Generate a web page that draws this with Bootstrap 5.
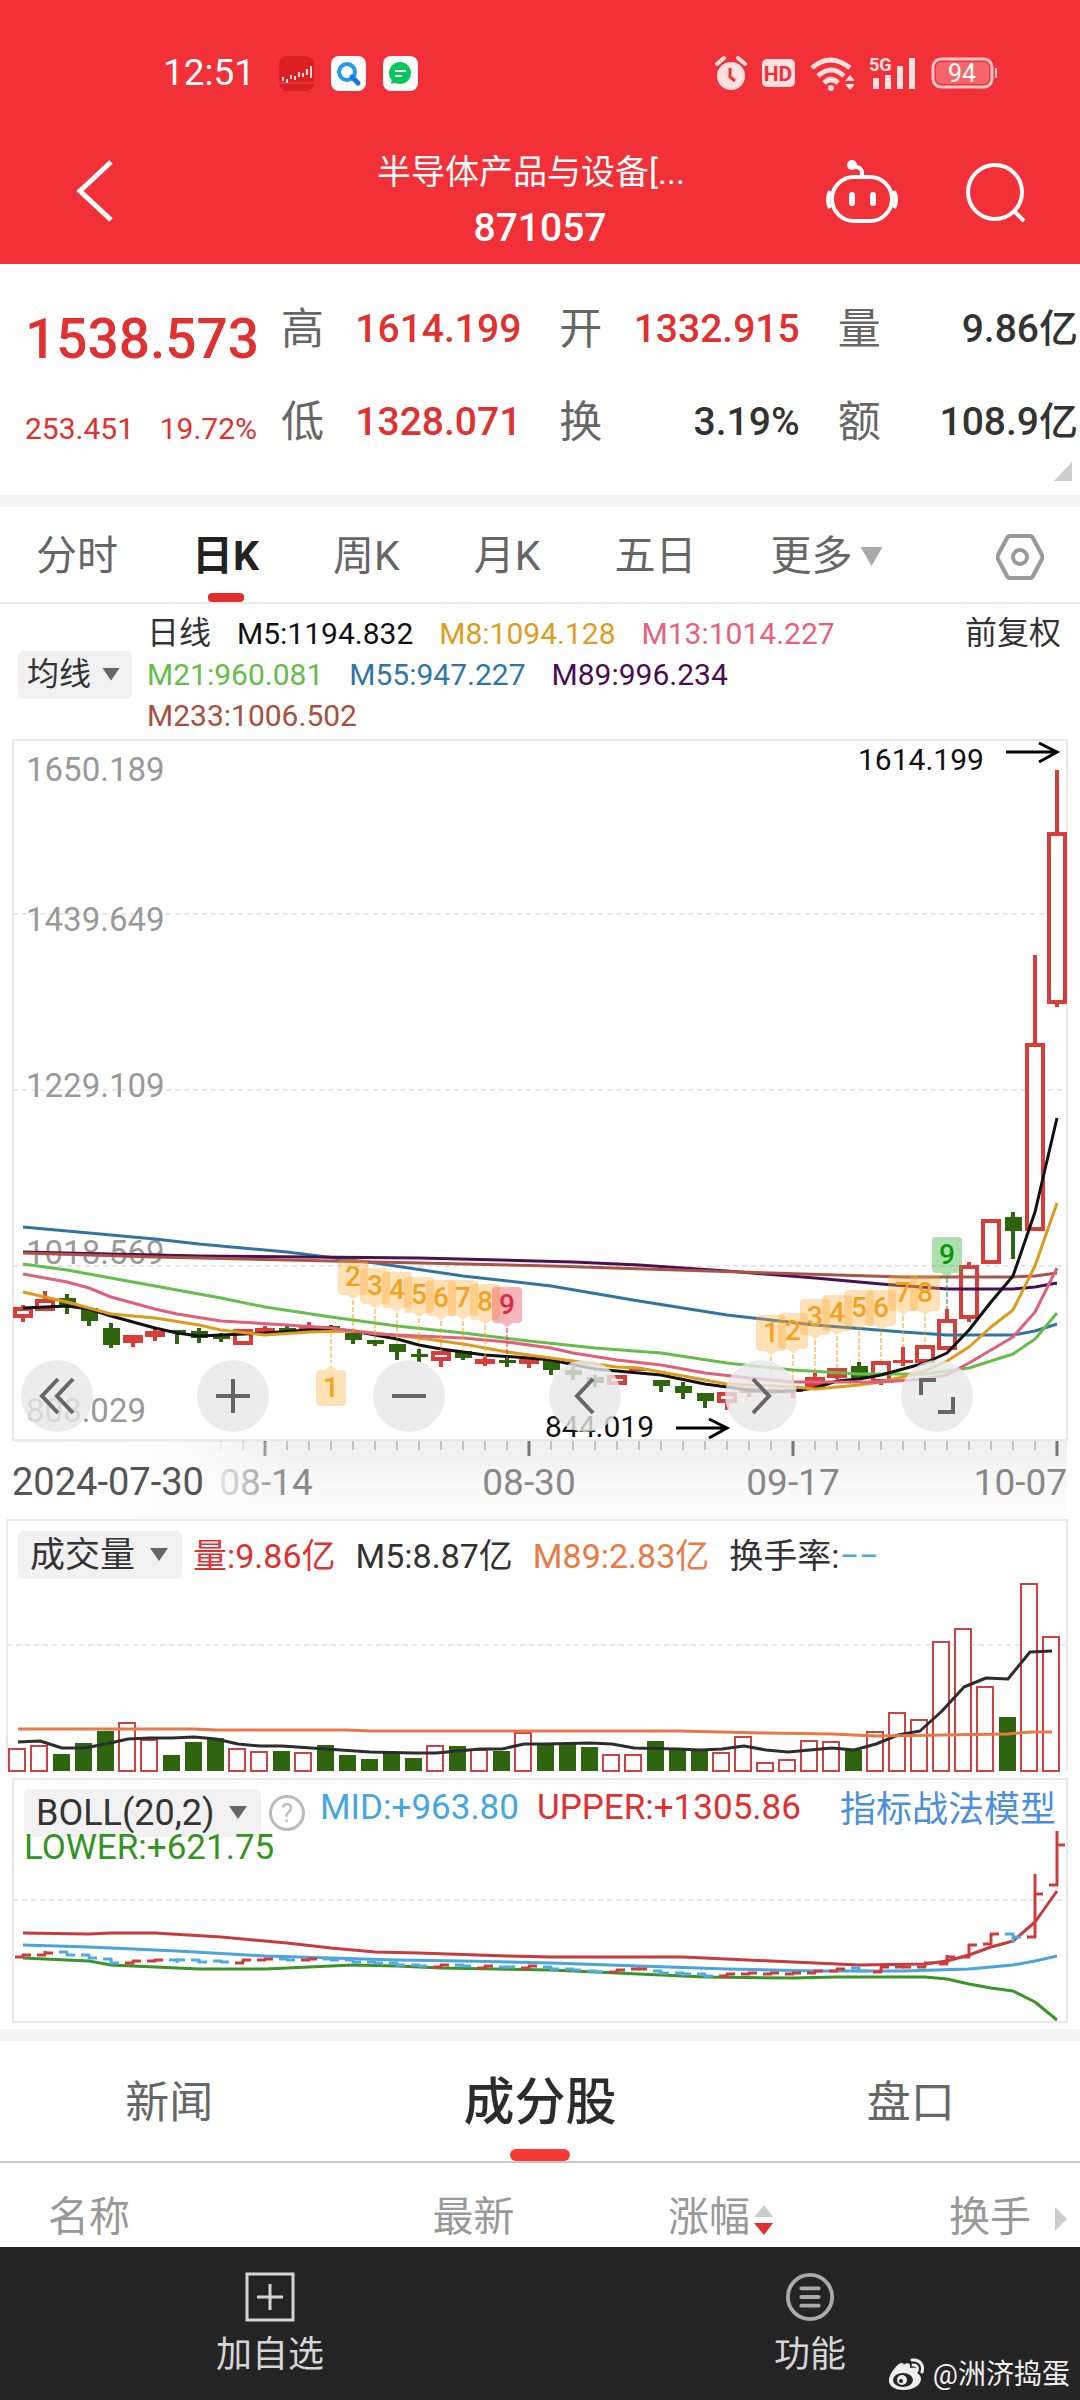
<!DOCTYPE html>
<html lang="zh-CN">
<head>
<meta charset="utf-8">
<meta name="viewport" content="width=device-width, initial-scale=1">
<title>半导体产品与设备 871057</title>
<link href="https://cdn.jsdelivr.net/npm/bootstrap@5.3.0/dist/css/bootstrap.min.css" rel="stylesheet">
<style>
:root{--up:#e0302f;--ink:#333;--mute:#666;--font:Roboto,"Noto Sans CJK SC",sans-serif}
body{font-family:var(--font);color:var(--ink);background:#fff}
button,select{font-family:inherit}
svg{display:block}
.bare{padding:0;border:0;border-radius:0;background:none;color:inherit;line-height:inherit}
.up{color:var(--up)}
.app-head{background:#f23038;color:#fff;height:264px}
.status{padding:50px 83px 0 163px;height:96px}
.clock{font-size:37px;line-height:44px}
.status-apps{gap:17px;margin-left:24px}
.status-sys{gap:15px}
.titlebar{height:168px;padding:0 54px}
.titlebar .side{flex:1 1 0}
.titlebar .back{margin-left:22px}
.titlebar .side-end{gap:68px}
.title-name{font-size:34px;line-height:56px;width:326px;white-space:nowrap}
.title-code{font-size:39px;line-height:56px;font-weight:500}
.quote{height:231px;padding-right:2px}
.quote-main{width:257px;padding:31px 0 0 25px;margin-right:24px;line-height:89px}
.quote-price{font-size:55px;font-weight:500;text-align:right}
.quote-chg{font-size:30px}
.quote-pairs{gap:0 38px;padding-top:19px;display:grid;grid-template-columns:repeat(3,1fr);align-content:start;margin:0;line-height:93px}
.quote-pairs dt{font-size:43px;font-weight:400;color:var(--mute)}
.quote-pairs dd{font-size:39px;font-weight:500;margin:0;white-space:nowrap}
.corner{right:8px;bottom:14px;width:18px;height:19px;background:#ccc;clip-path:polygon(100% 0,100% 100%,0 100%)}
.band{height:12px;background:#f4f4f4}
.period{height:97px;gap:74px;padding:0 36px;font-size:41px;border-bottom:2px solid #e9e9e9;color:var(--mute)}
.period .bare{line-height:91px;padding-top:4px;position:relative}
.period .active{color:#222;font-weight:700}
.period .active::after{content:"";position:absolute;left:50%;bottom:0;width:36px;height:9px;margin-left:-18px;border-radius:4px;background:var(--up)}
.tri{display:inline-block;width:22px;height:19px;background:#aaa;clip-path:polygon(0 0,100% 0,50% 100%)}
.pick{position:relative;display:inline-block;background:#f1f1f1;border-radius:6px}
.pick select{appearance:none;border:0;background:none;color:var(--ink);height:48px;padding:0 46px 0 12px;display:block}
.pick::after{content:"";position:absolute;right:14px;top:50%;width:18px;height:13px;margin-top:-7px;background:#666;clip-path:polygon(0 0,100% 0,50% 100%);pointer-events:none}
.pick-sm select{font-size:32px;padding:0 40px 0 9px}
.pick-sm::after{right:12px}
.ma-head{padding:9px 19px 2px 18px;font-size:30px;line-height:41px}
.ma-list{gap:0 26px;margin:0 20px 0 15px}
.ma-cjk{font-size:32px}
.tool-row{left:1.94%;right:9.9%;top:79.7%}
.tool{width:72px;height:72px;border-radius:50%;border:0;padding:0;background:rgba(231,231,231,.8);display:flex;align-items:center;justify-content:center}
.ind-row{font-size:34px;line-height:50px;left:18px;right:12px;top:13px;gap:20px;white-space:nowrap}
.ind-row select,.boll-row select{font-size:35px}
.ind-row .pick{margin-right:-9px;align-self:flex-start}
.boll-row{font-size:35px;line-height:40px;left:24px;right:24px;top:10px;white-space:nowrap}
.boll-row select{font-size:36px;padding-left:12px}
.boll-row .pick{margin-top:1px}
.help{width:36px;height:36px;border:3px solid #bbb;border-radius:50%;color:#bbb;font-size:26px;line-height:30px;padding:0;background:none;margin:7px 15px 0 8px}
.boll-upper{margin-left:18px}
.boll-low{left:24px;top:50px;font-size:35px;line-height:40px;color:#339423}
.model-link{font-size:36px;color:#4a8fe0;text-decoration:none;padding-top:2px}
.sub-tabs{height:122px;font-size:44px;color:var(--mute);border-bottom:2px solid #c8c8c8}
.sub-tabs .bare{line-height:116px;padding-top:4px;position:relative}
.sub-tabs .active{font-size:51px;font-weight:500;color:#2c2c2c}
.sub-tabs .active::after{content:"";position:absolute;left:50%;bottom:0;width:60px;height:12px;margin-left:-30px;border-radius:6px;background:#f93a33}
.stock-head{margin:0;font-size:41px;table-layout:fixed}
.stock-head th{font-weight:400;color:#999;height:84px;padding:24px 48px 0;border:0;white-space:nowrap;line-height:60px;vertical-align:top;background:none}
.stock-head th:nth-child(2){padding:24px 0 0 22px}
.stock-head th:nth-child(3){padding:24px 37px 0 0}
.stock-head th:nth-child(4){padding:24px 13px 0 0}
.sorter{display:inline-block;vertical-align:middle;margin-left:4px}
.more-cols{display:inline-block;margin-left:24px;width:12px;height:24px;background:#ccc;clip-path:polygon(0 0,100% 50%,0 100%)}
.dock{background:#242424;color:#d5d5d5;height:153px}
.dock .bare{font-size:36px;line-height:54px;padding-top:25px;align-self:flex-start}
.dock svg{margin:0 auto 6px}
.sign{right:10px;bottom:8px;font-size:28px;line-height:34px;color:#eee;gap:7px}
.dock .sign svg{margin:0}
svg text{font-family:var(--font)}
.ax{font-size:33px;fill:#999}
.dt{font-size:37px;fill:#888}
.ext{font-size:30px;fill:#111}
.seq{font-size:28px;text-anchor:middle;font-weight:500}
</style>
<script src="https://cdn.jsdelivr.net/npm/bootstrap@5.3.0/dist/js/bootstrap.bundle.min.js" defer></script>
</head>
<body>
<header class="app-head">
  <div class="status d-flex align-items-center">
    <span class="clock">12:51</span>
    <div class="status-apps d-flex">
      <svg width="35" height="35" viewBox="0 0 35 35"><rect width="35" height="35" rx="8" fill="#dc2022"/><path d="M0 27h35" stroke="#ef4a48" stroke-width="1"/><path d="M4 21v4M8 23v4M12 19v4M16 20v4M20 16v5M24 17v4M28 13v6M32 10v12" stroke="#ffdede" stroke-width="2"/></svg>
      <svg width="35" height="35" viewBox="0 0 35 35"><rect width="35" height="35" rx="8" fill="#fff"/><circle cx="16" cy="16" r="8" fill="none" stroke="#1f9af0" stroke-width="4"/><path d="M21 21l6 6" stroke="#1478e8" stroke-width="5" stroke-linecap="round"/></svg>
      <svg width="35" height="35" viewBox="0 0 35 35"><rect width="35" height="35" rx="8" fill="#fff"/><circle cx="17" cy="17" r="11" fill="#07c75a"/><path d="M9 22l-1 6 7-2z" fill="#07c75a"/><path d="M12 15h11M12 20h7" stroke="#fff" stroke-width="2"/></svg>
    </div>
    <div class="status-sys d-flex align-items-center ms-auto">
      <svg width="32" height="35" viewBox="0 0 32 35"><circle cx="16" cy="20" r="14" fill="#ffe0e1"/><path d="M2 8l7-6M30 8l-7-6" stroke="#ffe0e1" stroke-width="4" stroke-linecap="round"/><path d="M15 12v9l5 4" fill="none" stroke="#f23038" stroke-width="3"/></svg>
      <svg width="33" height="28" viewBox="0 0 33 28"><rect width="33" height="28" rx="5" fill="#ffe0e1"/><text x="16" y="22" font-size="21" font-weight="700" text-anchor="middle" fill="#f23038">HD</text></svg>
      <svg width="44" height="35" viewBox="0 0 44 35"><g fill="none" stroke="#ffe0e1" stroke-width="5"><path d="M2 12q18-16 38 0"/><path d="M8 20q13-12 26 0"/><path d="M14 27q7-7 14 0"/></g><circle cx="21" cy="32" r="3" fill="#ffe0e1"/><path d="M35 25l5-6 5 6zM35 28l5 6 5-6z" fill="#ffe0e1"/></svg>
      <svg width="47" height="43" viewBox="0 -4 47 43"><text x="0" y="15" font-size="18" font-weight="700" fill="#ffe0e1">5G</text><path d="M7 22v11M19 19v14M31 10v23M43 2v31" stroke="#ffe0e1" stroke-width="6"/></svg>
      <svg width="66" height="32" viewBox="0 0 66 32"><rect x="2" y="2" width="59" height="28" rx="8" fill="none" stroke="#ffc4c6" stroke-width="3"/><rect x="5" y="5" width="53" height="22" rx="5" fill="#f6656a"/><path d="M65 11v10" stroke="#ffc4c6" stroke-width="2"/><text x="31" y="25" font-size="25" text-anchor="middle" fill="#fff">94</text></svg>
    </div>
  </div>
  <nav class="titlebar d-flex" aria-label="标题">
    <div class="side pt-5"><button class="bare back mt-3" type="button" aria-label="返回"><svg width="38" height="62" viewBox="0 0 38 62"><path d="M35 2L4 31l31 29" fill="none" stroke="#fff" stroke-width="5"/></svg></button></div>
    <div class="pt-5"><h1 class="title-name m-0 fw-normal">半导体产品与设备[...</h1><div class="title-code text-center">871057</div></div>
    <div class="side side-end d-flex justify-content-end align-items-start pt-5">
      <button class="bare mt-3" type="button" aria-label="助手"><svg width="72" height="64" viewBox="0 0 72 64"><g fill="none" stroke="#fff" stroke-width="4"><rect x="6" y="17" width="60" height="44" rx="22"/><path d="M36 17C37 8 33 7 27 6"/><path d="M4 31q-4 9 0 17M68 31q4 9 0 17"/></g><circle cx="26" cy="5" r="5" fill="#fff"/><path d="M26 35v8M47 35v8" stroke="#fff" stroke-width="6" stroke-linecap="round"/></svg></button>
      <button class="bare mt-3" type="button" aria-label="搜索"><svg width="60" height="64" viewBox="0 0 60 64"><circle cx="29" cy="32" r="27" fill="none" stroke="#fff" stroke-width="4"/><path d="M48 51l10 10" stroke="#fff" stroke-width="4"/></svg></button>
    </div>
  </nav>
</header>

<main>
<section class="quote d-flex position-relative">
  <div class="quote-main up">
    <div class="quote-price">1538.573</div>
    <div class="quote-chg d-flex justify-content-between"><span>253.451</span><span>19.72%</span></div>
  </div>
  <dl class="quote-pairs flex-grow-1">
    <div class="d-flex justify-content-between"><dt>高</dt><dd class="up">1614.199</dd></div>
    <div class="d-flex justify-content-between"><dt>开</dt><dd class="up">1332.915</dd></div>
    <div class="d-flex justify-content-between"><dt>量</dt><dd>9.86亿</dd></div>
    <div class="d-flex justify-content-between"><dt>低</dt><dd class="up">1328.071</dd></div>
    <div class="d-flex justify-content-between"><dt>换</dt><dd>3.19%</dd></div>
    <div class="d-flex justify-content-between"><dt>额</dt><dd>108.9亿</dd></div>
  </dl>
  <span class="corner position-absolute"></span>
</section>
<div class="band"></div>

<nav class="period d-flex align-items-center" aria-label="周期">
  <button class="bare" type="button">分时</button>
  <button class="bare active" type="button">日K</button>
  <button class="bare" type="button">周K</button>
  <button class="bare" type="button">月K</button>
  <button class="bare" type="button">五日</button>
  <button class="bare d-flex align-items-center gap-2" type="button">更多<span class="tri"></span></button>
  <button class="bare ms-auto" type="button" aria-label="设置"><svg width="48" height="46" viewBox="0 0 48 46"><path d="M14 2h20q2 0 3 2l9 17q1 2 0 4l-9 17q-1 2-3 2H14q-2 0-3-2L2 25q-1-2 0-4L11 4q1-2 3-2z" fill="none" stroke="#999" stroke-width="4"/><circle cx="24" cy="23" r="7" fill="none" stroke="#999" stroke-width="4"/></svg></button>
</nav>

<section class="ma-head d-flex">
  <div class="pick pick-sm align-self-center"><select aria-label="主图指标"><option>均线</option></select></div>
  <div class="ma-list d-flex flex-wrap flex-grow-1">
    <span class="ma-cjk">日线</span>
    <span style="color:#111">M5:1194.832</span>
    <span style="color:#df9c1d">M8:1094.128</span>
    <span style="color:#e8607c">M13:1014.227</span>
    <span style="color:#63bd48">M21:960.081</span>
    <span style="color:#2f75a5">M55:947.227</span>
    <span style="color:#4a0d52">M89:996.234</span>
    <span style="color:#a94f3d">M233:1006.502</span>
  </div>
  <button class="bare align-self-start ma-cjk text-nowrap" type="button">前复权</button>
</section>

<section class="position-relative" aria-label="日K线图">
  <svg id="kline" width="100%" viewBox="0 738 1080 780"></svg>
  <div class="tool-row position-absolute d-flex justify-content-between">
    <button class="tool" type="button" aria-label="最左"><svg width="36" height="38" viewBox="0 0 36 38" fill="none" stroke="#666" stroke-width="4"><path d="M19 2L3 19l16 17M34 2L18 19l16 17"/></svg></button>
    <button class="tool" type="button" aria-label="放大"><svg width="34" height="34" viewBox="0 0 34 34" stroke="#666" stroke-width="4"><path d="M0 17h34M17 0v34"/></svg></button>
    <button class="tool" type="button" aria-label="缩小"><svg width="34" height="34" viewBox="0 0 34 34" stroke="#666" stroke-width="4"><path d="M0 17h34"/></svg></button>
    <button class="tool" type="button" aria-label="左移"><svg width="22" height="38" viewBox="0 0 22 38" fill="none" stroke="#666" stroke-width="4"><path d="M19 2L3 19l16 17"/></svg></button>
    <button class="tool" type="button" aria-label="右移"><svg width="22" height="38" viewBox="0 0 22 38" fill="none" stroke="#666" stroke-width="4"><path d="M3 2l16 17L3 36"/></svg></button>
    <button class="tool" type="button" aria-label="全屏"><svg width="38" height="38" viewBox="0 0 38 38" fill="none" stroke="#666" stroke-width="4"><path d="M3 18V3h15M35 20v15H20"/></svg></button>
  </div>
</section>

<section class="position-relative" aria-label="成交量图">
  <svg id="volume" width="100%" viewBox="0 1518 1080 260"></svg>
  <div class="ind-row position-absolute d-flex">
    <div class="pick"><select aria-label="副图一"><option>成交量</option></select></div>
    <span class="up">量:9.86亿</span>
    <span>M5:8.87亿</span>
    <span style="color:#ec7844">M89:2.83亿</span>
    <span>换手率:<span style="color:#4aa8dc">−−</span></span>
  </div>
</section>

<section class="position-relative" aria-label="BOLL图">
  <svg id="boll" width="100%" viewBox="0 1778 1080 251"></svg>
  <div class="boll-row position-absolute d-flex align-items-start">
    <div class="pick"><select aria-label="副图二"><option>BOLL(20,2)</option></select></div>
    <button class="help" type="button" aria-label="说明">?</button>
    <span style="color:#45a6e2">MID:+963.80</span>
    <span class="boll-upper up">UPPER:+1305.86</span>
    <a class="model-link ms-auto" href="#">指标战法模型</a>
  </div>
  <span class="boll-low position-absolute">LOWER:+621.75</span>
</section>
<div class="band"></div>

<nav class="sub-tabs d-flex justify-content-around" aria-label="板块资料">
  <button class="bare" type="button">新闻</button>
  <button class="bare active" type="button">成分股</button>
  <button class="bare" type="button">盘口</button>
</nav>
<table class="stock-head table">
  <colgroup><col style="width:38%"><col style="width:14%"><col style="width:23%"><col style="width:25%"></colgroup>
  <thead><tr>
    <th scope="col">名称</th>
    <th scope="col">最新</th>
    <th scope="col" class="text-end">涨幅<svg class="sorter" width="19" height="30" viewBox="0 0 19 30"><path d="M0 12L10 0 19 12z" fill="#ccc"/><path d="M0 18h19L10 30z" fill="#e0302f"/></svg></th>
    <th scope="col" class="text-end">换手<span class="more-cols"></span></th>
  </tr></thead>
</table>
</main>

<footer class="dock d-flex position-relative">
  <button class="bare flex-fill w-50" type="button"><svg width="50" height="50" viewBox="0 0 50 50" fill="none" stroke="#d5d5d5" stroke-width="3"><rect x="2" y="2" width="46" height="46"/><path d="M25 12v26M12 25h26"/></svg>加自选</button>
  <button class="bare flex-fill w-50" type="button"><svg width="52" height="50" viewBox="0 0 52 52" fill="none" stroke="#aaa" stroke-width="4"><circle cx="26" cy="26" r="23"/><path d="M17 17h18M17 26h18M17 35h18" stroke-linecap="round"/></svg>功能</button>
  <div class="sign position-absolute d-flex align-items-center">
    <svg width="38" height="34" viewBox="0 0 38 34"><path d="M15 7c5-3 8-2 7 3 6-1 9 1 7 5 9 5 2 17-13 17C5 32 0 27 1 21 2 15 9 6 13 5c3 0 3 1 2 2z" fill="#eee"/><ellipse cx="15" cy="22" rx="10" ry="7" fill="#242424"/><circle cx="14" cy="22" r="5" fill="#eee"/><circle cx="13" cy="23" r="2" fill="#242424"/><path d="M24 2c8-1 12 5 10 12M25 7c4 0 5 2 4 6" fill="none" stroke="#eee" stroke-width="3" stroke-linecap="round"/></svg>
    <span>@洲济捣蛋</span>
  </div>
</footer>

<script>
const STEP = 22, RED = '#d83d3a', GREEN = '#30650f';
// each day: direction, body top, body bottom, high, low
const days = [
 ['r',1307,1317,1305,1322],['r',1299,1310,1291,1311],['g',1298,1307,1294,1314],['g',1308,1321,1307,1326],
 ['g',1328,1345,1323,1348],['r',1335,1342,1335,1347],['r',1331,1337,1328,1341],['g',1330,1333,1330,1344],
 ['g',1331,1338,1328,1343],['g',1336,1338,1333,1342],['r',1329,1344,1329,1344],['r',1328,1332,1326,1332],
 ['g',1328,1332,1324,1332],['r',1326,1330,1322,1333],['g',1326,1329,1325,1330],['g',1333,1340,1333,1344],
 ['g',1340,1344,1340,1346],['g',1344,1352,1344,1360],['g',1354,1357,1349,1362],['r',1351,1360,1351,1367],
 ['g',1351,1358,1351,1360],['r',1359,1364,1357,1366],['g',1360,1362,1358,1367],['r',1359,1364,1359,1368],
 ['g',1360,1370,1360,1375],['g',1370,1375,1367,1380],['g',1377,1383,1375,1387],['r',1375,1384,1375,1385],
 ['r',1368,1371,1368,1371],['g',1380,1386,1380,1392],['g',1386,1393,1382,1399],['g',1393,1401,1393,1408],
 ['r',1392,1402,1392,1410],['r',1388,1393,1388,1397],['r',1389,1392,1389,1392],['r',1389,1392,1389,1398],
 ['r',1377,1386,1373,1386],['r',1368,1377,1368,1379],['g',1366,1378,1362,1378],['r',1361,1382,1361,1385],
 ['r',1360,1363,1347,1366],['r',1345,1362,1345,1362],['r',1319,1349,1309,1349],['r',1265,1318,1262,1322],
 ['r',1219,1263,1219,1263],['g',1217,1231,1212,1259],['r',1043,1230,955,1231],['r',832,1003,770,1007]];
const volTops = [1749,1746,1754,1743,1731,1723,1740,1755,1742,1738,1749,1752,1751,1753,1745,1755,1759,1753,1758,1746,1746,1750,1751,1733,1744,1744,1747,1755,1755,1741,1749,1750,1753,1737,1763,1760,1741,1742,1750,1732,1713,1720,1642,1629,1687,1717,1584,1637];
const line = (pts, color, x0, w = 3) => {
  const p = [];
  for (let k = 0; k < pts.length; k += 2) p.push((x0 + pts[k] * STEP) + ',' + pts[k + 1]);
  return `<polyline points="${p.join(' ')}" fill="none" stroke="${color}" stroke-width="${w}" stroke-linejoin="round"/>`;
};
const seg = (x1, y1, x2, y2, color, w, dash = '') =>
  `<path d="M${x1} ${y1}L${x2} ${y2}" stroke="${color}" stroke-width="${w}" ${dash ? `stroke-dasharray="${dash}"` : ''}/>`;
const grid = (y, x = 13) => seg(x, y, 1067, y, '#e6e6e6', 2, '5 4');
const label = (x, y, cls, s, anchor = 'start', fill = '') => `<text x="${x}" y="${y}" class="${cls}" text-anchor="${anchor}" ${fill ? `fill="${fill}"` : ''}>${s}</text>`;

let k = `<defs>
 <linearGradient id="strip" x1="0" y1="0" x2="0" y2="1"><stop offset="0" stop-color="#efefef"/><stop offset=".6" stop-color="#f9f9f9"/><stop offset="1" stop-color="#fbfbfb"/></linearGradient>
 <linearGradient id="fade" x1="0" y1="0" x2="1" y2="0"><stop offset="0" stop-color="#fff"/><stop offset=".5" stop-color="#fdfdfd"/><stop offset=".75" stop-color="#fbfbfb" stop-opacity=".8"/><stop offset="1" stop-color="#fafafa" stop-opacity="0"/></linearGradient></defs>
 <rect x="13" y="1441" width="1054" height="77" fill="url(#strip)"/>`;
k += '<rect x="13" y="740" width="1054" height="700" fill="#fff" stroke="#e9e9e9" stroke-width="2"/>' + grid(914) + grid(1090) + grid(1266);
k += label(26,781,'ax','1650.189') + label(26,931,'ax','1439.649') + label(26,1097,'ax','1229.109') + label(26,1264,'ax','1018.569') + label(26,1422,'ax','808.029');
days.forEach(([c, t, b, hi, lo], i) => {
  const x = 23 + i * STEP, col = c === 'r' ? RED : GREEN;
  if (hi < t) k += seg(x, hi, x, t, col, 4);
  if (lo > b) k += seg(x, b, x, lo, col, 4);
  if (c === 'g') k += `<rect x="${x - 8}" y="${t}" width="17" height="${Math.max(b - t, 3)}" fill="${col}"/>`;
  else if (b - t < 7) k += `<rect x="${x - 10}" y="${t}" width="20" height="${b - t}" fill="${col}"/>`;
  else k += `<rect x="${x - 8}" y="${t + 2}" width="16" height="${b - t - 3}" fill="#fff" stroke="${col}" stroke-width="4"/>`;
});
k += line([0,1227,6,1239,8,1244,12,1252,16,1263,20,1276,24,1286,28,1301,32,1315,36,1325,40,1332,42,1335,45,1335,46,1331,47,1324],'#3274a1',23);
k += line([0,1252,4,1254,8,1256,18,1258,25,1262,28,1265,32,1271,36,1278,39,1284,42,1289,45,1289,46,1287,47,1283],'#4b1054',23);
k += line([0,1253,6,1257,16,1262,24,1266,34,1273,40,1277,45,1277,46,1276,47,1273],'#ab5444',23);
k += line([0,1264,2,1270,6,1286,9,1298,11,1307,14,1317,17,1326,20,1333,23,1341,26,1348,29,1353,32,1363,35,1370,38,1374,41,1374,43,1368,45,1354,46,1339,47,1313],'#67bd4a',23);
k += line([0,1308,2,1306,3,1309,4,1316,6,1328,7,1333,8,1336,9,1335,11,1333,13,1330,14,1329,15,1331,16,1335,17,1339,18,1345,19,1349,21,1355,23,1358,24,1360,26,1369,27,1371,29,1375,31,1384,33,1390,34,1392,35,1391,36,1388,37,1381,38,1379,39,1375,40,1369,41,1363,42,1353,43,1330,44,1302,45,1276,46,1212,47,1118],'#111',23);
k += line([0,1292,2,1302,4,1314,6,1318,8,1325,9,1330,11,1335,13,1332,15,1331,16,1333,18,1338,20,1344,22,1352,23,1355,25,1361,27,1367,28,1368,30,1376,32,1384,34,1386,35,1387,36,1389,38,1385,39,1382,40,1377,41,1371,42,1361,43,1347,44,1327,45,1310,46,1266,47,1203],'#dd9b1c',23);
k += line([0,1274,2,1282,3,1288,4,1297,6,1309,7,1314,9,1321,12,1325,14,1328,16,1334,20,1338,22,1342,24,1348,25,1353,27,1360,29,1365,31,1373,33,1378,35,1382,37,1382,39,1382,41,1379,42,1375,43,1363,44,1350,45,1337,46,1312,47,1268],'#e0607b',23);
// nine-turn markers: day, digit, box top, end of the dashed stem
const orange = ['rgba(255,170,50,.35)', '#f5a01e'], redTag = ['rgba(235,60,70,.38)', '#e0283a'], greenTag = ['rgba(60,180,60,.42)', '#0a960a'];
[[15,2,1259,1333],[16,3,1268,1340],[17,4,1272,1344],[18,5,1277,1349],[19,6,1280,1351],[20,7,1280,1351],[21,8,1284,1359],[22,9,1287,1360,redTag],
 [34,1,1315,1388],[35,2,1313,1390],[36,3,1299,1375],[37,4,1295,1368],[38,5,1290,1362],[39,6,1290,1361],[40,7,1275,1347],[41,8,1275,1345],[42,9,1237,1309,greenTag]
].forEach(([i, n, y, end, tone = orange]) => {
  const x = 23 + i * STEP;
  k += seg(x, y + 41, x, end, tone[1], 1, '5 2');
  k += `<path d="M${x-11} ${y}h22q4 0 4 4v28q0 4-4 4h-5l-6 4-6-4h-5q-4 0-4-4v-28q0-4 4-4z" fill="${tone[0]}"/>` + label(x, y + 27, 'seq', n, 'middle', tone[1]);
});
k += seg(331,1332,331,1363,orange[1],1,'5 2') + `<path d="M320 1406h22q4 0 4-4v-28q0-4-4-4h-5l-6-5-6 5h-5q-4 0-4 4v28q0 4 4 4z" fill="${orange[0]}"/>` + label(331,1397,'seq',1,'middle',orange[1]);
k += label(858,770,'ext','1614.199') + label(545,1437,'ext','844.019');
k += '<path d="M1006 752h50M1039 743l18 9-18 10M676 1428h50M709 1419l18 9-18 10" fill="none" stroke="#000" stroke-width="3"/>';
for (let i = 9; i < 48; i++) {
  const big = (i - 11) % 12 === 0, x = 23 + i * STEP;
  k += seg(x, 1441, x, big ? 1456 : 1450, big ? '#777' : '#999', big ? 3 : 1);
}
k += label(266,1495,'dt','08-14','middle') + label(529,1495,'dt','08-30','middle') + label(793,1495,'dt','09-17','middle') + label(1067,1495,'dt','10-07','end');
k += '<rect x="0" y="1442" width="290" height="76" fill="url(#fade)"/><text x="12" y="1495" font-size="38" fill="#555">2024-07-30</text>';
document.getElementById('kline').innerHTML = k;

let v = '<path d="M7 1771V1520H1067V1771" fill="none" stroke="#e9e9e9" stroke-width="2"/>' + grid(1645, 7);
days.forEach(([c], i) => {
  const x = 17 + i * STEP, t = volTops[i];
  v += c === 'g' ? `<rect x="${x - 8}" y="${t}" width="17" height="${1771 - t}" fill="${GREEN}"/>`
                 : `<rect x="${x - 8}" y="${t}" width="16" height="${1771 - t}" fill="#fff" stroke="#d04242" stroke-width="2"/>`;
});
v += line([0,1742,1,1741,2,1748,3,1748,4,1744,5,1739,6,1738,7,1738,8,1737,9,1739,10,1744,11,1746,12,1746,14,1749,16,1752,18,1753,19,1753,20,1751,21,1749,22,1749,23,1744,24,1744,26,1743,27,1744,28,1748,30,1749,31,1750,32,1749,33,1746,34,1750,35,1752,36,1750,37,1748,38,1750,39,1744,40,1735,41,1731,42,1711,43,1687,44,1678,45,1679,46,1652,47,1651],'#2d2d2d',18,3);
v += line([0,1729,8,1729,9,1730,15,1730,16,1731,30,1731,34,1733,37,1734,39,1736,42,1735,45,1734,46,1732,47,1732],'#e87848',18,3);
document.getElementById('volume').innerHTML = v;

let b = '<path d="M13 1779H1067V2022H13Z" fill="none" stroke="#e9e9e9" stroke-width="2"/>' + grid(1900);
b += line([0,1958,3,1961,4,1965,6,1967,8,1969,11,1969,13,1967,15,1965,17,1966,19,1968,24,1970,27,1973,31,1977,35,1978,37,1977,41,1977,42,1979,43,1984,44,1988,45,1991,46,2002,47,2020],'#3a9428',23);
b += line([0,1945,3,1947,7,1951,11,1956,14,1958,17,1960,20,1961,24,1963,28,1966,32,1969,36,1971,40,1971,43,1969,45,1965,46,1961,47,1956],'#4aa5dc',23);
b += line([0,1933,3,1934,4,1933,6,1933,9,1937,12,1943,14,1948,16,1952,18,1953,22,1956,24,1957,30,1957,34,1961,38,1965,41,1964,42,1961,43,1955,44,1947,45,1941,46,1922,47,1891],'#c63b3b',23);
const by = y => Math.round(1831 + (y - 770) * .23);
days.forEach(([c, t, bt, hi, lo], i) => {
  const x = 23 + i * STEP, up = c === 'r', col = up ? '#d13a3c' : '#52abe0';
  const o = by(up ? bt : t), cl = by(up ? t : bt);
  b += seg(x - 8, o, x + 1, o, col, 3) + seg(x, by(hi), x, by(lo), col, 3) + seg(x - 1, cl, x + 8, cl, col, 3);
});
document.getElementById('boll').innerHTML = b;
</script>
</body>
</html>
